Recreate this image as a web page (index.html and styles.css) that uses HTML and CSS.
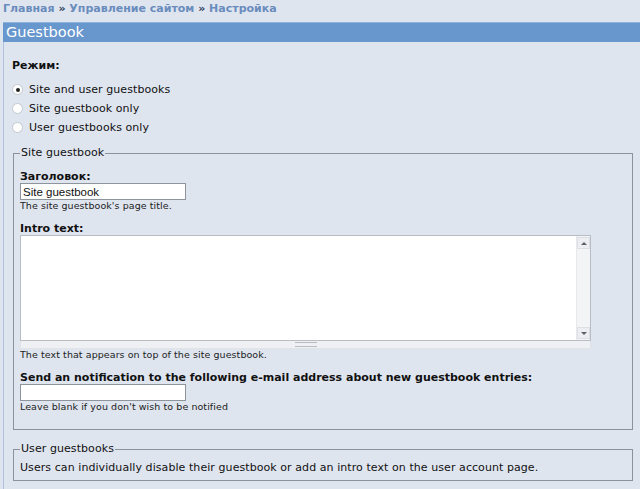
FILE: index.html
```html
<!DOCTYPE html>
<html lang="ru">
<head>
    <meta charset="UTF-8">
    <title>Настройка - Guestbook</title>
    <link rel="stylesheet" href="styles.css">
</head>
<body>
    <div class="breadcrumb">
        <a href="#">Главная</a> » <a href="#">Управление сайтом</a> » <a href="#">Настройка</a>
    </div>

    <div class="block">
        <h2 class="block-title">Guestbook</h2>
        <div class="block-content">
            <form>
                <div class="form-item">
                    <div class="label">Режим:</div>
                    <div class="radios">
                        <label class="radio"><input type="radio" name="mode" checked> Site and user guestbooks</label>
                        <label class="radio"><input type="radio" name="mode"> Site guestbook only</label>
                        <label class="radio"><input type="radio" name="mode"> User guestbooks only</label>
                    </div>
                </div>

                <fieldset class="site-fieldset">
                    <legend>Site guestbook</legend>

                    <div class="field">
                        <label class="label" for="title">Заголовок:</label>
                        <input class="text-input" type="text" id="title" value="Site guestbook">
                        <div class="description">The site guestbook's page title.</div>
                    </div>

                    <div class="field">
                        <label class="label" for="intro">Intro text:</label>
                        <div class="textarea-box">
                            <textarea id="intro"></textarea>
                            <div class="scrollbar">
                                <div class="scroll-btn"><span class="arrow-up"></span></div>
                                <div class="scroll-track"></div>
                                <div class="scroll-btn"><span class="arrow-down"></span></div>
                            </div>
                        </div>
                        <div class="grippie"><span></span></div>
                        <div class="description">The text that appears on top of the site guestbook.</div>
                    </div>

                    <div class="field">
                        <label class="label" for="mail">Send an notification to the following e-mail address about new guestbook entries:</label>
                        <input class="text-input" type="text" id="mail" value="">
                        <div class="description">Leave blank if you don't wish to be notified</div>
                    </div>
                </fieldset>

                <fieldset class="user-fieldset">
                    <legend>User guestbooks</legend>
                    <p>Users can individually disable their guestbook or add an intro text on the user account page.</p>
                </fieldset>
            </form>
        </div>
    </div>
</body>
</html>
```

FILE: styles.css
```css
body {
    margin: 0;
    font-family: "DejaVu Sans", Verdana, sans-serif;
    font-size: 11px;
    letter-spacing: 0.07px;
    color: #111;
    background-color: #dfe5ef;
}
.breadcrumb {
    padding: 2px 3px 6px;
    line-height: 14px;
    font-weight: bold;
    letter-spacing: 0;
    color: #2c3e5c;
}
.breadcrumb a {
    color: #6a8cbd;
    text-decoration: none;
}
.block {
    margin-left: 3px;
}
.block-title {
    margin: 0;
    padding-left: 3px;
    height: 19px;
    line-height: 19px;
    border-top: 1px solid #8db3de;
    background-color: #6797cd;
    color: #fff;
    font-size: 14.5px;
    font-weight: normal;
    letter-spacing: 0;
}
.block-content {
    border-left: 1px solid #adc2dd;
    padding: 17px 7px 8px 8px;
}
.label {
    display: block;
    font-weight: bold;
    line-height: 14px;
    letter-spacing: 0;
}
.radios {
    margin-top: 7px;
}
.radio {
    display: flex;
    align-items: center;
    gap: 6px;
    height: 19px;
    line-height: 19px;
}
.radio input {
    appearance: none;
    margin: 0;
    width: 11px;
    height: 11px;
    border: 1px solid #c3c8cf;
    border-radius: 50%;
    background: #fff;
    box-sizing: border-box;
    display: flex;
    align-items: center;
    justify-content: center;
}
.radio input:checked::after {
    content: "";
    width: 4px;
    height: 4px;
    border-radius: 50%;
    background: #222;
}
fieldset {
    margin: 9px 0 0 1px;
    border: 1px solid #8d9198;
    padding: 0 7px 16px 6px;
}
legend {
    padding: 0 1px;
    line-height: 14px;
}
.field {
    margin-top: 11px;
}
.field .label {
    line-height: 12px;
}
.text-input {
    display: block;
    box-sizing: border-box;
    width: 166px;
    height: 17px;
    margin: 0;
    padding: 0 2px;
    border: 1px solid #8e949b;
    background: #fff;
    font-family: "Liberation Sans", Arial, sans-serif;
    font-size: 11.5px;
    letter-spacing: 0;
    color: #111;
}
.description {
    font-size: 9.5px;
    line-height: 12px;
    color: #222;
}
.textarea-box {
    display: flex;
    width: 571px;
    height: 106px;
    box-sizing: border-box;
    border: 1px solid #b9bdc4;
    background: #fff;
}
.textarea-box textarea {
    flex: 1;
    border: none;
    resize: none;
    margin: 0;
    padding: 2px;
    outline: none;
    background: #fff;
}
.scrollbar {
    width: 13px;
    display: flex;
    flex-direction: column;
    padding: 1px 0;
    background: #f3f4f6;
    border-left: 1px solid #e7e9ec;
}
.scroll-btn {
    height: 10px;
    display: flex;
    align-items: center;
    justify-content: center;
    background: #eceef1;
    border: 1px solid #dcdfe3;
}
.scroll-track {
    flex: 1;
}
.arrow-up, .arrow-down {
    width: 0;
    height: 0;
    border-left: 3px solid transparent;
    border-right: 3px solid transparent;
}
.arrow-up {
    border-bottom: 3px solid #5c6066;
}
.arrow-down {
    border-top: 3px solid #5c6066;
}
.grippie {
    width: 571px;
    height: 8px;
    box-sizing: border-box;
    border: 1px solid #e1e3e7;
    border-top: none;
    background: #eef0f3;
    display: flex;
    justify-content: center;
    align-items: center;
}
.grippie span {
    width: 22px;
    height: 3px;
    border-top: 1px solid #b8bbc0;
    border-bottom: 1px solid #b8bbc0;
}
.user-fieldset {
    margin-top: 12px;
    padding: 5px 7px 5px 6px;
}
.user-fieldset p {
    margin: 0;
    line-height: 14px;
}
```
